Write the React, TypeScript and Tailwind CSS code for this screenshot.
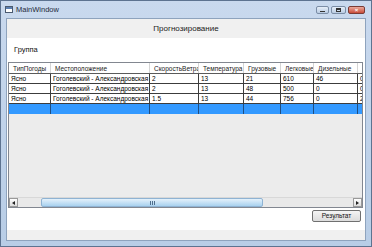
import React from "react";

const columns = [
  { title: "ТипПогоды", w: "w-[42px]" },
  { title: "Местоположение", w: "w-[99px]" },
  { title: "СкоростьВетра", w: "w-[49px]" },
  { title: "Температура", w: "w-[45px]" },
  { title: "Грузовые", w: "w-[37px]" },
  { title: "Легковые", w: "w-[33px]" },
  { title: "Дизельные", w: "w-[44px]" },
  { title: "Мотоциклы", w: "w-[40px]" },
];

const rows = [
  ["Ясно", "Гоголевский - Александровская", "2", "13", "21", "610", "46", "0"],
  ["Ясно", "Гоголевский - Александровская", "2", "13", "48", "500", "0", "0"],
  ["Ясно", "Гоголевский - Александровская", "1.5", "13", "44", "756", "0", "2"],
];

function TitleButtons() {
  return (
    <div className="flex items-center gap-[2px] pr-[6px]">
      <div className="w-[13px] h-[8px] rounded-[2px] border border-[#7b8da6] bg-gradient-to-b from-[#e6eef8] to-[#b9cbe2] flex items-end justify-center pb-[1px]">
        <div className="w-[5px] h-[1px] bg-[#333]" />
      </div>
      <div className="w-[15px] h-[8px] rounded-[2px] border border-[#7b8da6] bg-gradient-to-b from-[#e6eef8] to-[#b9cbe2] flex items-center justify-center">
        <div className="w-[5px] h-[4px] border border-[#333] border-t-2" />
      </div>
      <div className="w-[17px] h-[8px] rounded-[2px] border border-[#7a3b35] bg-gradient-to-b from-[#e9a99c] to-[#c84a38] flex items-center justify-center text-white text-[6px] leading-none font-bold">
        ×
      </div>
    </div>
  );
}

export default function App() {
  return (
    <div
      className="w-[372px] h-[247px] bg-gradient-to-b from-[#c9d9ee] to-[#b8cde6] border border-[#5d7390] flex flex-col overflow-hidden"
      style={{ fontFamily: '"Liberation Sans", Arial, sans-serif' }}
    >
      {/* title bar */}
      <div className="h-[17px] flex items-center justify-between shrink-0">
        <div className="flex items-center pl-[4px] gap-[3px]">
          <div className="w-[8px] h-[7px] border border-[#4a5a70] bg-white flex flex-col">
            <div className="h-[2px] bg-[#5b7fb0]" />
          </div>
          <span className="text-[7.5px] text-[#1e2a3a] leading-none">MainWindow</span>
        </div>
        <TitleButtons />
      </div>

      {/* client area */}
      <div className="mx-[5px] mb-[5px] flex-1 flex flex-col bg-white border border-[#8ea3bd]">
        <div className="h-[19px] bg-[#f0f0f0] flex items-center justify-center text-[8px] text-[#222] shrink-0">
          Прогнозирование
        </div>
        <div className="h-[24px] flex items-center pl-[7px] text-[7.5px] text-[#111] shrink-0">Группа</div>

        {/* data grid */}
        <div className="ml-[1px] mr-[2px] h-[146px] border border-[#828790] flex flex-col shrink-0 bg-[#ececec]">
          <div className="overflow-hidden">
            <div className="flex h-[11px] bg-white border-b border-[#5a5a5a] w-max">
              {columns.map((c) => (
                <div
                  key={c.title}
                  className={`${c.w} shrink-0 border-r border-[#d5d5d5] pl-[4px] text-[6.5px] leading-[11px] text-[#222] whitespace-nowrap overflow-hidden`}
                >
                  {c.title}
                </div>
              ))}
            </div>
            {rows.map((r, i) => (
              <div key={i} className="flex h-[10px] bg-white border-b border-[#3c3c3c] w-max">
                {r.map((v, j) => (
                  <div
                    key={j}
                    className={`${columns[j].w} shrink-0 border-r border-[#3c3c3c] pl-[2px] text-[6.5px] leading-[10px] text-black whitespace-nowrap overflow-hidden`}
                  >
                    {v}
                  </div>
                ))}
              </div>
            ))}
            <div className="flex h-[10px] bg-[#3399ff] w-max">
              {columns.map((c) => (
                <div key={c.title} className={`${c.w} shrink-0 border-r border-[#1f4d80]`} />
              ))}
            </div>
          </div>
          <div className="flex-1" />

          {/* horizontal scrollbar */}
          <div className="h-[10px] flex items-stretch bg-[#e9e9e9] border-t border-[#d8d8d8]">
            <div className="w-[9px] border border-[#9a9a9a] bg-gradient-to-b from-white to-[#dcdcdc] flex items-center justify-center">
              <div className="w-0 h-0 border-y-[2px] border-y-transparent border-r-[3px] border-r-[#222]" />
            </div>
            <div className="w-[23px]" />
            <div className="w-[222px] rounded-[2px] border border-[#8fb3d3] bg-gradient-to-b from-[#e4f1fb] to-[#a9d2ef] flex items-center justify-center">
              <div className="flex gap-[1px]">
                <div className="w-[1px] h-[4px] bg-[#4f6f8e]" />
                <div className="w-[1px] h-[4px] bg-[#4f6f8e]" />
                <div className="w-[1px] h-[4px] bg-[#4f6f8e]" />
              </div>
            </div>
            <div className="flex-1" />
            <div className="w-[9px] border border-[#9a9a9a] bg-gradient-to-b from-white to-[#dcdcdc] flex items-center justify-center">
              <div className="w-0 h-0 border-y-[2px] border-y-transparent border-l-[3px] border-l-[#222]" />
            </div>
          </div>
        </div>

        <div className="flex-1 flex items-start justify-end pt-[2px] pr-[4px]">
          <button className="w-[49px] h-[12px] rounded-[2px] border border-[#707070] bg-gradient-to-b from-[#f4f4f4] to-[#dcdcdc] text-[6.5px] leading-none text-[#111]">
            Результат
          </button>
        </div>
        <div className="h-[10px] bg-[#f0f0f0] shrink-0" />
      </div>
    </div>
  );
}
